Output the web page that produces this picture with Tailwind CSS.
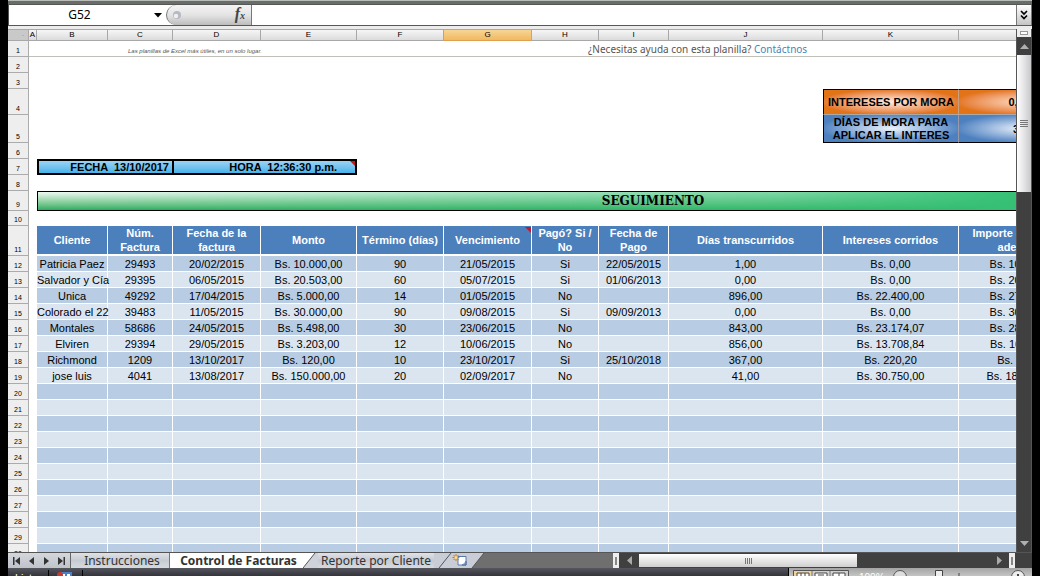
<!DOCTYPE html>
<html lang="es">
<head>
<meta charset="utf-8">
<title>Control de Facturas</title>
<script src="https://cdn.jsdelivr.net/npm/@tailwindcss/browser@4"></script>
</head>
<body class="h-screen overflow-hidden bg-black px-2 font-['Liberation_Sans',Arial,sans-serif] text-black">
<div class="flex h-full flex-col overflow-hidden">
  <div class="h-1 shrink-0 border-t border-[#b9bdb9] bg-[#6a6c6a]"></div>

  <!-- Formula bar -->
  <header class="flex h-[22px] shrink-0 border-y border-[#555855] bg-white">
    <input aria-label="Cuadro de nombres" value="G52" class="w-[142px] min-w-0 border-l border-[#555] bg-white text-center font-['Noto_Sans',sans-serif] text-xs outline-none">
    <button aria-label="Abrir nombres" class="flex w-4 items-center justify-center"><svg width="8" height="5" viewBox="0 0 8 5"><path d="M0 0h8L4 4.500z"/></svg></button>
    <div class="flex w-[86px] border-r border-[#777] bg-white">
      <button aria-label="Insertar función" class="flex h-full w-full items-center justify-between rounded-l-full border-l border-[#777] bg-linear-to-b from-[#f4f4f4] via-[#e4e4e4] to-[#bdbdbd] pr-1.5 pl-1.5">
        <svg width="8" height="8" viewBox="0 0 8 8"><circle cx="4" cy="4" r="4" fill="#b6b8c2"/><circle cx="3" cy="5" r="2.200" fill="#eff0f5"/></svg>
        <span class="font-['Liberation_Serif',serif] text-base leading-4 font-bold text-[#444] italic">f<span class="text-[10px]">x</span></span>
      </button>
    </div>
    <input aria-label="Barra de fórmulas" class="min-w-0 flex-1 bg-white px-2 text-xs outline-none">
    <button aria-label="Expandir barra de fórmulas" class="flex w-4 items-center justify-center border-x border-[#777] bg-linear-to-b from-white to-[#c4c4c4]"><svg width="8" height="10" viewBox="0 0 8 10" fill="none" stroke="#000" stroke-width="1.700"><path d="M1 1l3 3 3-3M1 5.500l3 3 3-3"/></svg></button>
  </header>
  <div class="h-[3px] shrink-0 bg-[#ececec]"></div>

  <main class="flex min-h-0 flex-1">
    <div class="min-w-0 flex-1 overflow-hidden bg-white">
      <table class="w-[1261px] table-fixed border-separate border-spacing-0 text-center text-[11px] leading-[14px] [&_td]:p-0 [&_th]:p-0">
        <colgroup>
          <col class="w-[21px]"><col class="w-[8px]"><col class="w-[71px]"><col class="w-[65px]"><col class="w-[88px]"><col class="w-[96px]"><col class="w-[87px]"><col class="w-[88px]"><col class="w-[67px]"><col class="w-[70px]"><col class="w-[154px]"><col class="w-[136px]"><col class="w-[130px]"><col class="w-[180px]">
        </colgroup>
        <thead class="text-[8px] leading-[10px] [&_th]:h-3 [&_th]:border-t [&_th]:border-r [&_th]:border-b [&_th]:border-[#a8a8a8] [&_th]:bg-linear-to-b [&_th]:from-[#f6f6f6] [&_th]:to-[#dcdcdc] [&_th]:font-normal">
          <tr>
            <th class="text-right text-[#888]"><div class="h-2.5 bg-[#c9c9c9] pr-1 leading-[8px]">.</div></th><th>A</th><th>B</th><th>C</th><th>D</th><th>E</th><th>F</th>
            <th class="border-[#e0a050]! from-[#f8d595]! to-[#efb960]!">G</th>
            <th>H</th><th>I</th><th>J</th><th>K</th><th>L</th><th>M</th>
          </tr>
        </thead>
        <tbody id="rows" class="[&_th]:border-r [&_th]:border-b [&_th]:border-[#ababab] [&_th]:bg-[#eeeeee] [&_th]:align-bottom [&_th]:text-[7px] [&_th]:leading-[10px] [&_th]:font-normal">
          <tr class="h-4"><th scope="row">1</th>
            <td class="border-b border-[#c0c0b8]"></td><td class="border-b border-[#c0c0b8]"></td>
            <td colspan="4" class="border-b border-[#c0c0b8] text-left align-bottom"><div class="pl-5 text-[6px] leading-[9px] text-[#555] italic">Las planillas de Excel más útiles, en un solo lugar.</div></td>
            <td class="border-b border-[#c0c0b8]"></td>
            <td colspan="7" class="border-b border-[#c0c0b8] text-left align-bottom"><div class="pl-14 font-['Noto_Sans',sans-serif] text-[10px] leading-[13px] text-[#555]">¿Necesitas ayuda con esta planilla? <a href="#contacto" class="text-[#3f86bd]">Contáctnos</a></div></td></tr>
          <tr class="h-4"><th scope="row">2</th></tr>
          <tr class="h-4"><th scope="row">3</th></tr>
          <tr class="h-[26px] font-bold"><th scope="row">4</th><td colspan="10"></td>
            <td class="border-t border-r border-b border-l border-black border-r-[#c9a080] border-b-[#aaa] bg-radial from-[#fdeee2] to-[#e27317] to-75% whitespace-nowrap">INTERESES POR MORA</td>
            <td class="border-t border-b border-black border-b-[#aaa] bg-radial from-[#fbdcc4] to-[#e27317] to-75%">0,05%</td></tr>
          <tr class="h-7 font-bold"><th scope="row">5</th><td colspan="10"></td>
            <td class="border-r border-b border-l border-black border-r-[#99a] bg-radial from-[#eef4fb] to-[#4d80bf] to-75% leading-[13px]">DÍAS DE MORA PARA APLICAR EL INTERES</td>
            <td class="border-b border-black bg-radial from-[#eef4fb] to-[#4d80bf] to-75%">30%</td></tr>
          <tr class="h-4"><th scope="row">6</th></tr>
          <tr class="h-4 font-bold"><th scope="row">7</th><td></td>
            <td colspan="2" class="bg-linear-to-b from-[#a6d8f6] to-[#30aee8]"><div class="h-4 border-y-2 border-r border-l-2 border-black pr-[3px] text-right leading-3 whitespace-pre">FECHA  13/10/2017</div></td>
            <td colspan="2" class="bg-linear-to-b from-[#a6d8f6] to-[#30aee8]"><div class="relative h-4 border-y-2 border-r-2 border-l border-black pr-[18px] text-right leading-3 whitespace-pre">HORA  12:36:30 p.m.<svg class="absolute top-0 right-0" width="5" height="5"><path d="M0 0h5v5z" fill="#c01818"/></svg></div></td></tr>
          <tr class="h-4"><th scope="row">8</th></tr>
          <tr class="h-5"><th scope="row">9</th><td></td>
            <td colspan="12" class="border border-black bg-linear-to-b from-[#eefaf2] to-[#22ad60]"><div class="bg-linear-to-r from-transparent via-[#34c074]/60 via-60% to-[#34c074] to-80% font-['DejaVu_Serif',serif] text-xs leading-[18px] font-bold">SEGUIMIENTO</div></td></tr>
          <tr class="h-[15px]"><th scope="row">10</th></tr>
          <tr class="h-[29px] font-bold text-white [&_td]:border-r [&_td]:border-b-2 [&_td]:border-white [&_td]:bg-[#4c80bc]"><th scope="row" class="text-black">11</th><td class="bg-white!"></td>
            <td>Cliente</td><td>Núm. Factura</td><td>Fecha de la factura</td><td>Monto</td><td class="whitespace-nowrap">Término (días)</td>
            <td><div class="relative flex h-[27px] items-center justify-center">Vencimiento<svg class="absolute top-0 right-0" width="6" height="6"><path d="M0 0h6v6z" fill="#c01830"/></svg></div></td>
            <td>Pagó? Si /<br>No</td><td>Fecha de Pago</td><td>Días transcurridos</td><td>Intereses corridos</td><td>Importe con interés<br>adeudado</td><td></td></tr>
        </tbody>
      </table>
    </div>

    <!-- Vertical scroll bar -->
    <aside class="flex w-4 shrink-0 flex-col border-x border-[#555] bg-[#404040]">
      <div class="flex h-2 items-center justify-center bg-[#eee]"><div class="h-1 w-2 border border-[#999] bg-white"></div></div>
      <button aria-label="Subir" class="flex h-[18px] shrink-0 items-center justify-center"><svg width="9" height="5"><path d="M0 5h9L4.500 0z" fill="#b0b0b0"/></svg></button>
      <button aria-label="Desplazar verticalmente" class="flex h-[137px] shrink-0 items-center justify-center bg-linear-to-r from-white via-[#e4e4e6] to-[#c8c8ca]"><span class="flex w-2 flex-col gap-px"><i class="h-px bg-[#777]"></i><i class="h-px bg-[#777]"></i><i class="h-px bg-[#777]"></i><i class="h-px bg-[#777]"></i></span></button>
      <div class="flex-1"></div>
      <button aria-label="Bajar" class="flex h-[18px] shrink-0 items-center justify-center"><svg width="9" height="5"><path d="M0 0h9L4.500 5z" fill="#b0b0b0"/></svg></button>
    </aside>
  </main>

  <!-- Sheet tabs and horizontal scroll bar -->
  <nav class="flex h-4 shrink-0 border-t border-[#555] bg-[#6f6f6f] font-['Noto_Sans',sans-serif] text-xs leading-[15px] text-[#333]">
    <div class="flex w-[63px] shrink-0 items-center justify-around border-r border-[#666] bg-linear-to-b from-[#d4d7dc] to-[#bfc3ca]">
      <button aria-label="Primera hoja"><svg width="7" height="8"><path d="M0 0h1.500v8H0zM7 0v8L2 4z" fill="#333"/></svg></button>
      <button aria-label="Hoja anterior"><svg width="5" height="8"><path d="M5 0v8L0 4z" fill="#333"/></svg></button>
      <button aria-label="Hoja siguiente"><svg width="5" height="8"><path d="M0 0v8l5-4z" fill="#333"/></svg></button>
      <button aria-label="Última hoja"><svg width="7" height="8"><path d="M5.500 0H7v8H5.500zM0 0v8l5-4z" fill="#333"/></svg></button>
    </div>
    <button class="w-[98px] shrink-0 bg-linear-to-b from-[#dfe2e7] via-[#c6cad2] to-[#d6dae0] pl-1">Instrucciones</button>
    <button class="h-[15px] w-[134px] shrink-0 border-l border-[#777] bg-white pl-1 font-bold">Control de Facturas</button>
    <svg class="shrink-0" width="15" height="15"><path d="M0 0h15v15H0z" fill="#cfd3d9"/><path d="M0 0h12L0 15z" fill="#fff"/><path d="M12 0L0 15" stroke="#555"/></svg>
    <button class="w-[116px] shrink-0 bg-linear-to-b from-[#dfe2e7] via-[#c6cad2] to-[#d6dae0]">Reporte por Cliente</button>
    <button aria-label="Insertar hoja" class="shrink-0"><svg width="50" height="15"><path d="M0 0h50L38 15H0z" fill="#c9ced6"/><path d="M17 0L5 15M50 0L38 15" stroke="#555"/><path d="M24 3.500h8v8.500h-8z" fill="#fff" stroke="#5a78b0"/><path d="M32 8v4h-4" fill="#8aa5d0" stroke="#4a68a0"/><path d="M22 1v7M18.500 4.500h7M19.500 2l5 5M24.500 2l-5 5" stroke="#c97818"/><circle cx="22" cy="4.500" r="1.500" fill="#ffe08a"/></svg></button>
    <div class="min-w-0 flex-1"></div>
    <div class="flex w-[419px] shrink-0 bg-[#404040]">
      <div class="flex w-1.5 items-center justify-center bg-[#eee]"><i class="h-2 w-0.5 bg-[#888]"></i></div>
      <button aria-label="Izquierda" class="flex w-5 items-center justify-center"><svg width="5" height="9"><path d="M5 0v9L0 4.500z" fill="#aaa"/></svg></button>
      <button aria-label="Desplazar horizontalmente" class="my-px flex w-[218px] items-center justify-center gap-px bg-linear-to-b from-white to-[#cfcfcf]"><i class="h-1.5 w-px bg-[#777]"></i><i class="h-1.5 w-px bg-[#777]"></i><i class="h-1.5 w-px bg-[#777]"></i><i class="h-1.5 w-px bg-[#777]"></i></button>
      <div class="flex-1"></div>
      <button aria-label="Derecha" class="flex w-5 items-center justify-center"><svg width="5" height="9"><path d="M0 0v9l5-4.500z" fill="#aaa"/></svg></button>
      <div class="flex w-1.5 items-center justify-center bg-[#eee]"><i class="h-2 w-0.5 bg-[#888]"></i></div>
      <div class="w-[17px]"></div>
    </div>
  </nav>

  <!-- Status bar, mostly below the window's edge -->
  <footer class="flex h-2 shrink-0 items-start overflow-hidden bg-linear-to-b from-[#55565e] to-[#33343c] text-[11px] leading-[14px] text-white">
    <span class="w-10 shrink-0 pt-[3px] pl-[7px]">Listo</span>
    <i class="mt-0.5 h-2 w-px bg-black"></i>
    <svg class="mt-1 ml-2 shrink-0" width="15" height="4"><path d="M3 0h12v4H3z" fill="#4c7fc8"/><path d="M5 2h3v2H5zM10 2h3v2h-3z" fill="#fff"/><circle cx="3" cy="3" r="3" fill="#c8382c"/></svg>
    <i class="mt-0.5 ml-2.5 h-2 w-px bg-black"></i>
    <div class="flex-1"></div>
    <div class="flex h-2 w-[244px] shrink-0 items-start border-l border-black bg-linear-to-b from-[#a4a4a4] to-[#c4c4c4] pt-0.5 pl-1">
      <svg class="shrink-0" width="56" height="6"><path d="M.5 8V.500h55V8" fill="#d0d0d0" stroke="#555"/><path d="M1 1h18v6H1z" fill="#f2d49a"/><path d="M19 1v6M37 1v6" stroke="#777"/><path d="M4 3h12v5H4zM22 3h12v5H22zM40 3h12v5H40z" fill="#fff" stroke="#444"/><path d="M8 3v4M12 3v4M25 5h6M46 3v4" stroke="#444"/></svg>
      <span class="w-9 shrink-0 pt-0.5 pl-2.5 text-[10px] leading-3">100%</span>
      <svg class="ml-0.5 shrink-0" width="140" height="6"><circle cx="13" cy="7" r="6.500" fill="#ddd" stroke="#555"/><path d="M48.500 8V.500h7V8" fill="#eee" stroke="#444"/><path d="M72 3v3" stroke="#444"/><circle cx="131" cy="7" r="6.500" fill="#eee" stroke="#555"/><path d="M131 4v3" stroke="#444" stroke-width="2"/></svg>
    </div>
  </footer>
</div>

<script>
const invoices = [
  ['Patricia Paez','29493','20/02/2015','Bs. 10.000,00','90','21/05/2015','Si','22/05/2015','1,00','Bs. 0,00','Bs. 10.000,00'],
  ['Salvador y Cía','29395','06/05/2015','Bs. 20.503,00','60','05/07/2015','Si','01/06/2013','0,00','Bs. 0,00','Bs. 20.503,00'],
  ['Unica','49292','17/04/2015','Bs. 5.000,00','14','01/05/2015','No','','896,00','Bs. 22.400,00','Bs. 27.400,00'],
  ['Colorado el 22','39483','11/05/2015','Bs. 30.000,00','90','09/08/2015','Si','09/09/2013','0,00','Bs. 0,00','Bs. 30.000,00'],
  ['Montales','58686','24/05/2015','Bs. 5.498,00','30','23/06/2015','No','','843,00','Bs. 23.174,07','Bs. 28.672,07'],
  ['Elviren','29394','29/05/2015','Bs. 3.203,00','12','10/06/2015','No','','856,00','Bs. 13.708,84','Bs. 16.911,84'],
  ['Richmond','1209','13/10/2017','Bs. 120,00','10','23/10/2017','Si','25/10/2018','367,00','Bs. 220,20','Bs. 340,20'],
  ['jose luis','4041','13/08/2017','Bs. 150.000,00','20','02/09/2017','No','','41,00','Bs. 30.750,00','Bs. 180.750,00']
];
const body = document.getElementById('rows');
for (let n = 12; n <= 30; n++) {
  const tr = document.createElement('tr');
  tr.className = 'h-4';
  const values = invoices[n - 12] || [];
  const cell = n % 2 ? 'border-r border-b border-white bg-[#dbe5f0] whitespace-nowrap' : 'border-r border-b border-white bg-[#b8cce3] whitespace-nowrap';
  let html = '<th scope="row">' + n + '</th><td></td>';
  for (let c = 0; c < 12; c++) html += '<td class="' + cell + '">' + (values[c] || '') + '</td>';
  tr.innerHTML = html;
  body.appendChild(tr);
}
</script>
</body>
</html>
